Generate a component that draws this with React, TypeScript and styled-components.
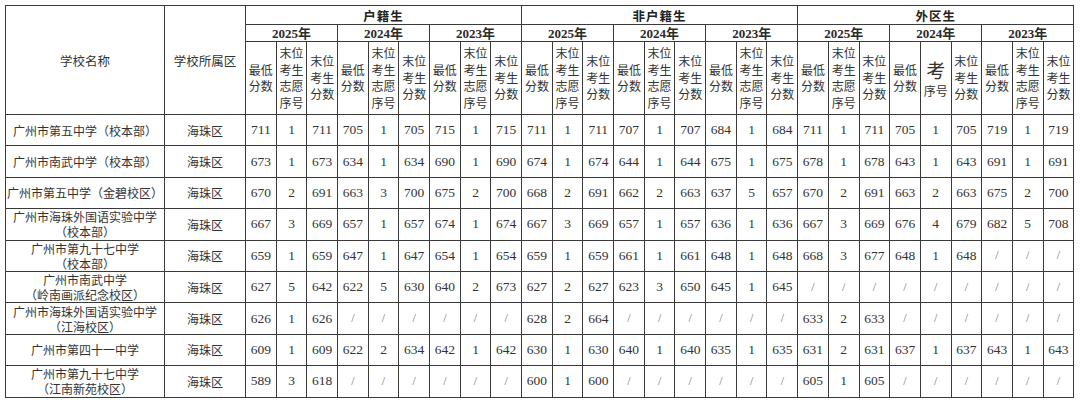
import React from 'react';
import styled, { createGlobalStyle } from 'styled-components';

const GlobalStyle = createGlobalStyle`
  html, body {
    margin: 0;
    padding: 0;
    background: #ffffff;
  }
  body {
    font-family: "Liberation Serif", "Noto Sans CJK SC", serif;
    color: #222;
  }
`;

type Row = { name: string[]; district: string; values: string[] };

const GROUPS = ['户籍生', '非户籍生', '外区生'];
const YEARS = ['2025年', '2024年', '2023年'];

const ROWS: Row[] = [
  {
    name: ['广州市第五中学（校本部）'],
    district: '海珠区',
    values: '711 1 711 705 1 705 715 1 715 711 1 711 707 1 707 684 1 684 711 1 711 705 1 705 719 1 719'.split(' '),
  },
  {
    name: ['广州市南武中学（校本部）'],
    district: '海珠区',
    values: '673 1 673 634 1 634 690 1 690 674 1 674 644 1 644 675 1 675 678 1 678 643 1 643 691 1 691'.split(' '),
  },
  {
    name: ['广州市第五中学（金碧校区）'],
    district: '海珠区',
    values: '670 2 691 663 3 700 675 2 700 668 2 691 662 2 663 637 5 657 670 2 691 663 2 663 675 2 700'.split(' '),
  },
  {
    name: ['广州市海珠外国语实验中学', '（校本部）'],
    district: '海珠区',
    values: '667 3 669 657 1 657 674 1 674 667 3 669 657 1 657 636 1 636 667 3 669 676 4 679 682 5 708'.split(' '),
  },
  {
    name: ['广州市第九十七中学', '（校本部）'],
    district: '海珠区',
    values: '659 1 659 647 1 647 654 1 654 659 1 659 661 1 661 648 1 648 668 3 677 648 1 648 / / /'.split(' '),
  },
  {
    name: ['广州市南武中学', '（岭南画派纪念校区）'],
    district: '海珠区',
    values: '627 5 642 622 5 630 640 2 673 627 2 627 623 3 650 645 1 645 / / / / / / / / /'.split(' '),
  },
  {
    name: ['广州市海珠外国语实验中学', '（江海校区）'],
    district: '海珠区',
    values: '626 1 626 / / / / / / 628 2 664 / / / / / / 633 2 633 / / / / / /'.split(' '),
  },
  {
    name: ['广州市第四十一中学'],
    district: '海珠区',
    values: '609 1 609 622 2 634 642 1 642 630 1 630 640 1 640 635 1 635 631 2 631 637 1 637 643 1 643'.split(' '),
  },
  {
    name: ['广州市第九十七中学', '（江南新苑校区）'],
    district: '海珠区',
    values: '589 3 618 / / / / / / 600 1 600 / / / / / / 605 1 605 / / / / / /'.split(' '),
  },
];

const LABELS = [['最低', '分数'], ['末位', '考生', '志愿', '序号'], ['末位', '考生', '分数']];

function Lines({ lines }: { lines: string[] }) {
  return (
    <>
      {lines.map((l, k) => (
        <React.Fragment key={k}>
          {k > 0 && <br />}
          {l}
        </React.Fragment>
      ))}
    </>
  );
}

export default function App() {
  return (
    <>
      <GlobalStyle />
      <Wrap>
        <Table>
          <colgroup>
            <col style={{ width: 159 }} />
            <col style={{ width: 81 }} />
            {Array.from({ length: 27 }, (_, i) => (
              <col key={i} style={{ width: 30.68 }} />
            ))}
          </colgroup>
          <thead>
            <tr>
              <TitleCell rowSpan={3}>学校名称</TitleCell>
              <TitleCell rowSpan={3}>学校所属区</TitleCell>
              {GROUPS.map((g) => (
                <GroupCell key={g} colSpan={9}>
                  {g}
                </GroupCell>
              ))}
            </tr>
            <tr>
              {GROUPS.map((g) =>
                YEARS.map((y) => (
                  <YearCell key={g + y} colSpan={3}>
                    {y}
                  </YearCell>
                )),
              )}
            </tr>
            <tr>
              {GROUPS.map((g, gi) =>
                YEARS.map((y, yi) =>
                  LABELS.map((lines, li) => (
                    <LabelCell key={g + y + li}>
                      {gi === 2 && yi === 1 && li === 1 ? (
                        <>
                          <BigChar>考</BigChar>
                          <br />
                          序号
                        </>
                      ) : (
                        <Lines lines={lines} />
                      )}
                    </LabelCell>
                  )),
                ),
              )}
            </tr>
          </thead>
          <tbody>
            {ROWS.map((r, ri) => (
              <tr key={ri}>
                <NameCell>
                  <Lines lines={r.name} />
                </NameCell>
                <NameCell>{r.district}</NameCell>
                {r.values.map((v, vi) => (
                  <NumCell key={vi} $empty={v === '/'}>
                    {v}
                  </NumCell>
                ))}
              </tr>
            ))}
          </tbody>
        </Table>
      </Wrap>
    </>
  );
}

const Wrap = styled.div`
  padding: 5px 0 0 5px;
`;

const Table = styled.table`
  border-collapse: collapse;
  table-layout: fixed;
  width: 1068px;

  th,
  td {
    border: 1px solid #3a3a3a;
    padding: 0;
    text-align: center;
    vertical-align: middle;
    white-space: nowrap;
    overflow: hidden;
  }

  thead tr:nth-child(1) {
    height: 19px;
  }
  thead tr:nth-child(2) {
    height: 17px;
  }
  thead tr:nth-child(3) {
    height: 73px;
  }
  tbody tr {
    height: 31.4px;
  }
`;

const TitleCell = styled.th`
  font-family: "Noto Sans CJK SC", sans-serif;
  font-size: 12.5px;
  font-weight: 400;
  color: #333;
`;

const GroupCell = styled.th`
  font-family: "Noto Sans CJK SC", sans-serif;
  font-size: 12.5px;
  font-weight: 700;
  letter-spacing: 1px;
  line-height: 17px;
  color: #222;
`;

const YearCell = styled.th`
  font-family: "Liberation Serif", "Noto Sans CJK SC", serif;
  font-size: 13px;
  font-weight: 700;
  line-height: 15px;
  color: #2a2a2a;
`;

const LabelCell = styled.th`
  font-family: "Noto Sans CJK SC", sans-serif;
  font-size: 12px;
  font-weight: 400;
  line-height: 16.5px;
  color: #333;
`;

const BigChar = styled.span`
  display: inline-block;
  font-size: 19px;
  line-height: 26px;
`;

const NameCell = styled.td`
  font-family: "Noto Sans CJK SC", sans-serif;
  font-size: 12px;
  line-height: 15px;
  color: #333;
`;

const NumCell = styled.td<{ $empty: boolean }>`
  font-family: "Liberation Serif", serif;
  font-size: ${(p) => (p.$empty ? '12px' : '13.5px')};
  color: ${(p) => (p.$empty ? '#777' : '#333')};
`;
